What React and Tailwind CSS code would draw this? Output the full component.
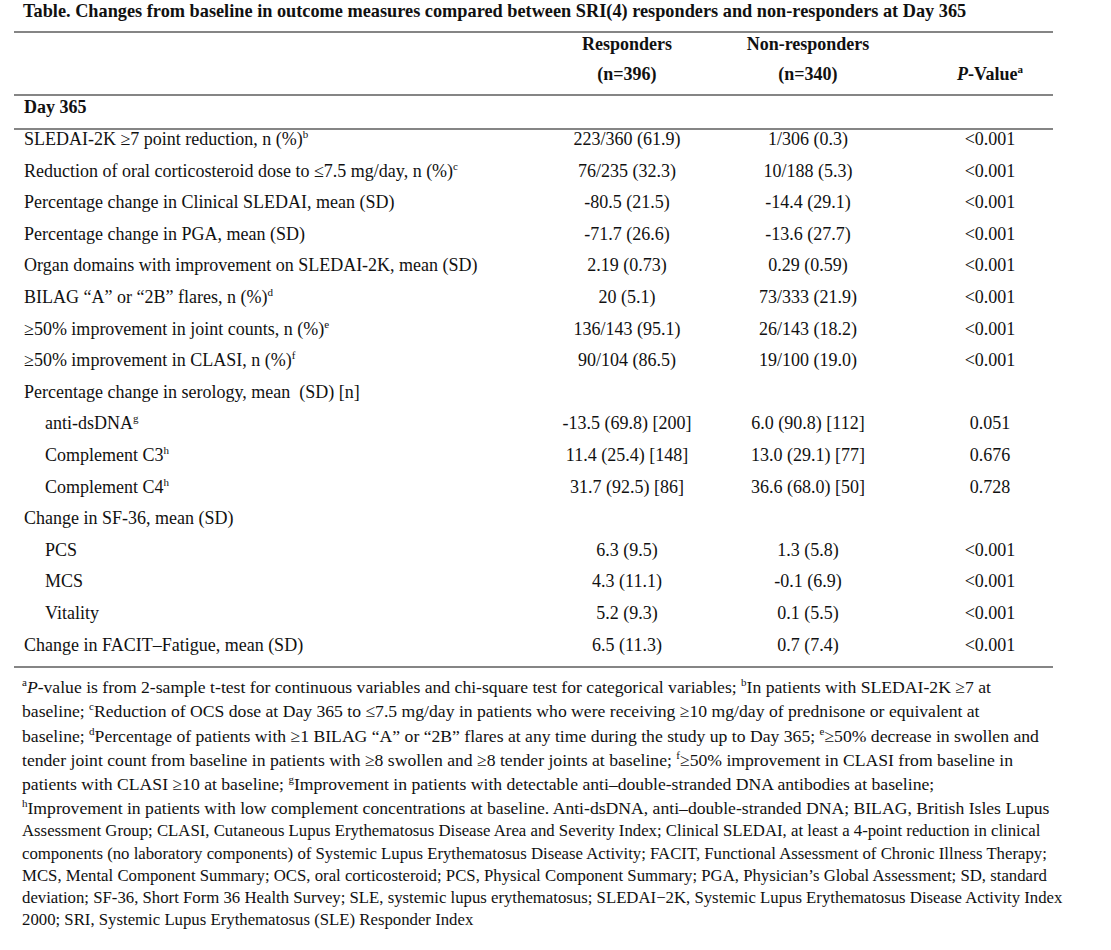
import React from "react";

const Sup = ({ children }) => (
  <span className="text-[11px] relative top-[-7px] leading-none">{children}</span>
);

const rows = [
  { l: <>SLEDAI-2K ≥7 point reduction, n (%)<Sup>b</Sup></>, r: "223/360 (61.9)", n: "1/306 (0.3)", p: "<0.001" },
  { l: <>Reduction of oral corticosteroid dose to ≤7.5 mg/day, n (%)<Sup>c</Sup></>, r: "76/235 (32.3)", n: "10/188 (5.3)", p: "<0.001" },
  { l: "Percentage change in Clinical SLEDAI, mean (SD)", r: "-80.5 (21.5)", n: "-14.4 (29.1)", p: "<0.001" },
  { l: "Percentage change in PGA, mean (SD)", r: "-71.7 (26.6)", n: "-13.6 (27.7)", p: "<0.001" },
  { l: "Organ domains with improvement on SLEDAI-2K, mean (SD)", r: "2.19 (0.73)", n: "0.29 (0.59)", p: "<0.001" },
  { l: <>BILAG “A” or “2B” flares, n (%)<Sup>d</Sup></>, r: "20 (5.1)", n: "73/333 (21.9)", p: "<0.001" },
  { l: <>≥50% improvement in joint counts, n (%)<Sup>e</Sup></>, r: "136/143 (95.1)", n: "26/143 (18.2)", p: "<0.001" },
  { l: <>≥50% improvement in CLASI, n (%)<Sup>f</Sup></>, r: "90/104 (86.5)", n: "19/100 (19.0)", p: "<0.001" },
  { l: "Percentage change in serology, mean\u00a0 (SD) [n]", r: "", n: "", p: "" },
  { l: <>anti-dsDNA<Sup>g</Sup></>, ind: true, r: "-13.5 (69.8) [200]", n: "6.0 (90.8) [112]", p: "0.051" },
  { l: <>Complement C3<Sup>h</Sup></>, ind: true, r: "11.4 (25.4) [148]", n: "13.0 (29.1) [77]", p: "0.676" },
  { l: <>Complement C4<Sup>h</Sup></>, ind: true, r: "31.7 (92.5) [86]", n: "36.6 (68.0) [50]", p: "0.728" },
  { l: "Change in SF-36, mean (SD)", r: "", n: "", p: "" },
  { l: "PCS", ind: true, r: "6.3 (9.5)", n: "1.3 (5.8)", p: "<0.001" },
  { l: "MCS", ind: true, r: "4.3 (11.1)", n: "-0.1 (6.9)", p: "<0.001" },
  { l: "Vitality", ind: true, r: "5.2 (9.3)", n: "0.1 (5.5)", p: "<0.001" },
  { l: "Change in FACIT–Fatigue, mean (SD)", r: "6.5 (11.3)", n: "0.7 (7.4)", p: "<0.001" },
];

const Rule = () => <div className="h-[2px] bg-[#858585]" />;

export default function App() {
  return (
    <div
      className="w-[1111px] h-[950px] bg-white text-[#111] text-[18px]"
      style={{ fontFamily: '"Liberation Serif", "Times New Roman", serif' }}
    >
      <div className="ml-[14px] w-[1039px]">
        <div className="pl-[9px] pt-[1px] h-[31px] text-[18.3px] leading-[20px] font-bold whitespace-nowrap">
          Table. Changes from baseline in outcome measures compared between SRI(4) responders and non-responders at Day 365
        </div>
        <Rule />
        <div className="grid grid-cols-[525px_176px_186px_152px] font-bold h-[61px] leading-[20px]">
          <div />
          <div className="flex flex-col items-center pt-[1px] gap-[10px]">
            <span>Responders</span>
            <span>(n=396)</span>
          </div>
          <div className="flex flex-col items-center pt-[1px] gap-[10px]">
            <span>Non-responders</span>
            <span>(n=340)</span>
          </div>
          <div className="flex flex-col items-center pl-[26px] pt-[31px]">
            <span>
              <i>P</i>-Value<Sup>a</Sup>
            </span>
          </div>
        </div>
        <Rule />
        <div className="pl-[10px] h-[32px] pt-[1px] leading-[20px] font-bold">Day 365</div>
        <Rule />
        <div className="mt-[-1px]">
          {rows.map((row, i) => (
            <div key={i} className="grid grid-cols-[525px_176px_186px_152px] h-[31.6px] leading-[20px] whitespace-nowrap">
              <div className={row.ind ? "pl-[31px]" : "pl-[10px]"}>{row.l}</div>
              <div className="text-center">{row.r}</div>
              <div className="text-center">{row.n}</div>
              <div className="text-center pl-[26px]">{row.p}</div>
            </div>
          ))}
        </div>
        <Rule />
        <div className="pl-[8px] pt-[7px] whitespace-nowrap">
          <div className="text-[17.65px] leading-[24.2px]">
            <Sup>a</Sup><i>P</i>-value is from 2-sample t-test for continuous variables and chi-square test for categorical variables; <Sup>b</Sup>In patients with SLEDAI-2K ≥7 at
            <br />
            baseline; <Sup>c</Sup>Reduction of OCS dose at Day 365 to ≤7.5 mg/day in patients who were receiving ≥10 mg/day of prednisone or equivalent at
            <br />
            baseline; <Sup>d</Sup>Percentage of patients with ≥1 BILAG “A” or “2B” flares at any time during the study up to Day 365; <Sup>e</Sup>≥50% decrease in swollen and
            <br />
            tender joint count from baseline in patients with ≥8 swollen and ≥8 tender joints at baseline; <Sup>f</Sup>≥50% improvement in CLASI from baseline in
            <br />
            patients with CLASI ≥10 at baseline; <Sup>g</Sup>Improvement in patients with detectable anti–double-stranded DNA antibodies at baseline;
            <br />
            <Sup>h</Sup>Improvement in patients with low complement concentrations at baseline. Anti-dsDNA, anti–double-stranded DNA; BILAG, British Isles Lupus
          </div>
          <div className="text-[16.75px] leading-[22.25px]">
            Assessment Group; CLASI, Cutaneous Lupus Erythematosus Disease Area and Severity Index; Clinical SLEDAI, at least a 4-point reduction in clinical
            <br />
            components (no laboratory components) of Systemic Lupus Erythematosus Disease Activity; FACIT, Functional Assessment of Chronic Illness Therapy;
            <br />
            MCS, Mental Component Summary; OCS, oral corticosteroid; PCS, Physical Component Summary; PGA, Physician’s Global Assessment; SD, standard
            <br />
            deviation; SF-36, Short Form 36 Health Survey; SLE, systemic lupus erythematosus; SLEDAI−2K, Systemic Lupus Erythematosus Disease Activity Index
            <br />
            2000; SRI, Systemic Lupus Erythematosus (SLE) Responder Index
          </div>
        </div>
      </div>
    </div>
  );
}
